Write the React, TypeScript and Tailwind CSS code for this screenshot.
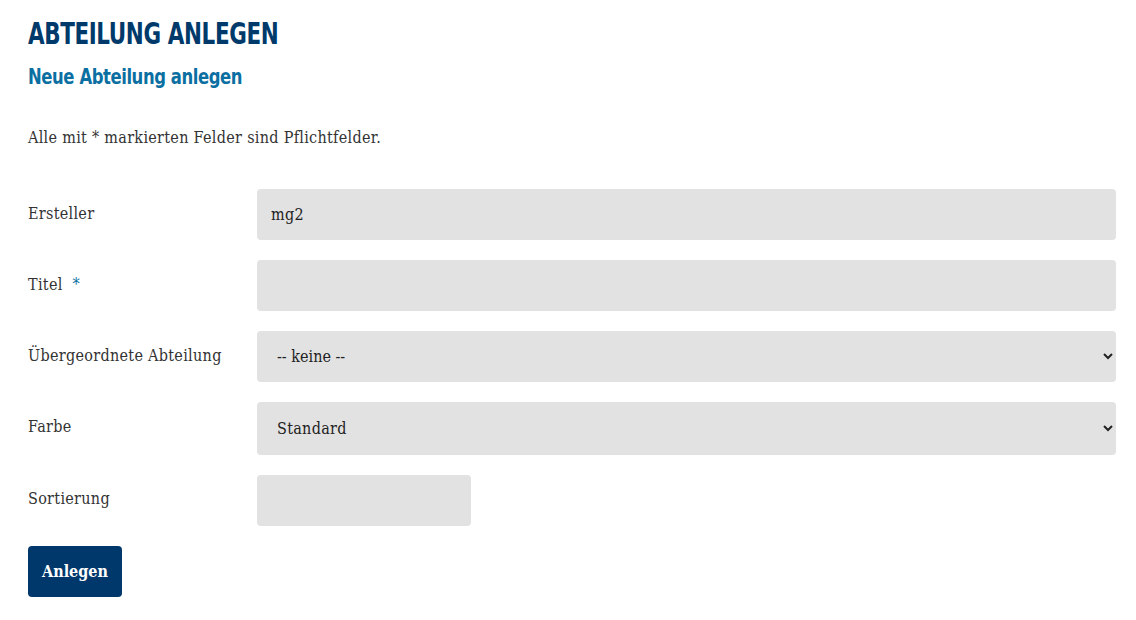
export default function App() {
  const serif = "font-['DejaVu_Serif_Condensed','DejaVu_Serif',serif] tracking-[0.3px]";
  const label = `w-[229px] shrink-0 text-[16px] text-[#333] ${serif}`;
  const field = "h-[51px] rounded bg-[#e2e2e2] px-[14px] text-[16px] text-[#222] outline-none";

  return (
    <div className="min-h-screen bg-white pl-[28px] pr-[20px] pt-[14px]">
      <h1 className="origin-left scale-x-[0.77] font-['DejaVu_Sans_Condensed','DejaVu_Sans',sans-serif] text-[31px] font-bold leading-[38px] tracking-[-0.5px] text-[#003a6b]">
        ABTEILUNG ANLEGEN
      </h1>
      <h2 className="mt-[10px] origin-left scale-x-[0.83] font-['DejaVu_Sans_Condensed','DejaVu_Sans',sans-serif] text-[22px] font-bold leading-[30px] tracking-[-0.5px] text-[#0b6fa2]">
        Neue Abteilung anlegen
      </h2>
      <p className={`mt-[34px] text-[16px] leading-[24px] text-[#333] ${serif}`}>
        Alle mit * markierten Felder sind Pflichtfelder.
      </p>

      <form className="mt-[39px] flex flex-col gap-[20px]" onSubmit={(e) => e.preventDefault()}>
        <div className="flex items-center">
          <label className={`${label} -mt-[2px]`}>Ersteller</label>
          <input className={`${field} flex-1 ${serif}`} defaultValue="mg2" />
        </div>
        <div className="flex items-center">
          <label className={`${label} -mt-[2px]`}>
            Titel <span className="ml-[5px] text-[#0b6fa2]">*</span>
          </label>
          <input className={`${field} flex-1 ${serif}`} />
        </div>
        <div className="flex items-center">
          <label className={`${label} -mt-[2px]`}>Übergeordnete Abteilung</label>
          <select className={`${field} flex-1 px-[16px] text-[13px] tracking-normal ${serif}`} defaultValue="">
            <option value="">-- keine --</option>
          </select>
        </div>
        <div className="flex items-center">
          <label className={`${label} -mt-[4px]`}>Farbe</label>
          <select className={`${field} h-[53px] flex-1 px-[16px] ${serif}`} defaultValue="standard">
            <option value="standard">Standard</option>
          </select>
        </div>
        <div className="flex items-center">
          <label className={`${label} -mt-[4px]`}>Sortierung</label>
          <input className={`${field} w-[214px] ${serif}`} />
        </div>
        <div>
          <button
            type="submit"
            className="h-[51px] rounded bg-[#00386b] px-[14px] font-['DejaVu_Serif_Condensed','DejaVu_Serif',serif] text-[16px] font-bold text-white"
          >
            Anlegen
          </button>
        </div>
      </form>
    </div>
  );
}
